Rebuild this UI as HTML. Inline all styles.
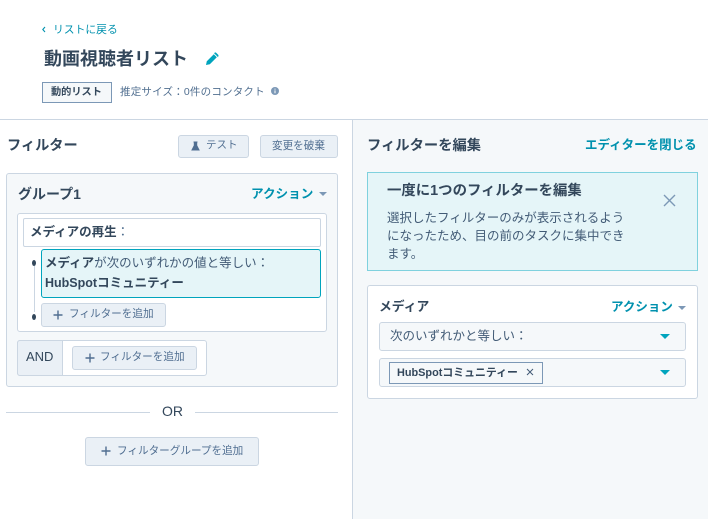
<!DOCTYPE html>
<html lang="ja"><head><meta charset="utf-8"><style>
html,body{margin:0;padding:0;background:#fff}
#r{position:relative;width:708px;height:519px;overflow:hidden;background:#fff;font-family:"Liberation Sans","Noto Sans CJK JP",sans-serif;color:#33475b;filter:blur(.3px)}
#r div,#r svg{position:absolute;box-sizing:border-box}
.t{white-space:nowrap;line-height:18px}
.b{font-weight:700}
.l{color:#0091ae}
.btn{background:#eaf0f6;border:1px solid #cbd6e2;border-radius:3px}
.g{color:#506e91}
</style></head><body><div id="r">
<svg style="left:41px;top:25px" width="6" height="9" viewBox="0 0 6 9"><path d="M4 2 1.8 4.5 4 7" fill="none" stroke="#0091ae" stroke-width="1.1"/></svg>
<div class="t l" style="left:53px;top:21px;font-size:10.8px">リストに戻る</div>
<div class="t b" style="left:44px;top:47px;font-size:18px;line-height:24px;width:150px">動画視聴者リスト</div>
<svg style="left:205px;top:52px" width="14" height="14" viewBox="0 0 14 14"><path d="M1 13 1.8 9.2 8.8 2.2 11.8 5.2 4.8 12.2Z" fill="#00a4bd"/><path d="M9.8 1.2 10.6.9 13 3.3 12.8 4.2Z" fill="#00a4bd" stroke="#00a4bd"/></svg>
<div style="left:42px;top:82px;width:70px;height:21px;background:#f5f8fa;border:1px solid #7c98b6"></div>
<div class="t b" style="left:51px;top:84px;font-size:10.2px">動的リスト</div>
<div class="t" style="left:120px;top:83px;font-size:10.5px;color:#516f90;letter-spacing:.2px">推定サイズ：0件のコンタクト</div>
<svg style="left:271px;top:87px" width="8" height="8" viewBox="0 0 8 8"><circle cx="4" cy="4" r="4" fill="#7c98b6"/><path d="M4 3.4V6.2M4 1.6V2.6" stroke="#fff" stroke-width="1"/></svg>

<div style="left:0;top:119px;width:708px;height:1px;background:#cbd6e2"></div>
<div style="left:353px;top:120px;width:355px;height:399px;background:#f5f8fa"></div>
<div style="left:352px;top:119px;width:1px;height:400px;background:#cbd6e2"></div>

<div class="t b" style="left:7px;top:136px;font-size:14.2px;line-height:20px">フィルター</div>
<div class="btn" style="left:178px;top:135px;width:71px;height:23px"></div>
<svg style="left:190px;top:141px" width="11" height="11" viewBox="0 0 11 11"><path d="M3.5 1h4M4.3 1v3.5L2 9h7L6.7 4.5V1" fill="#506e91" stroke="#506e91"/></svg>
<div class="t g" style="left:206px;top:136px;font-size:10.5px">テスト</div>
<div class="btn" style="left:260px;top:135px;width:78px;height:23px"></div>
<div class="t g" style="left:272px;top:137px;font-size:10.6px">変更を破棄</div>

<div style="left:6px;top:173px;width:332px;height:214px;background:#f5f8fa;border:1px solid #cbd6e2;border-radius:3px"></div>
<div class="t b" style="left:18px;top:184px;font-size:14px;line-height:20px">グループ1</div>
<div class="t b l" style="left:251px;top:185px;font-size:12.6px">アクション</div>
<div style="left:319px;top:192px;width:0;height:0;border:4px solid transparent;border-top:4px solid #7c98b6;border-bottom:0"></div>

<div style="left:17px;top:213px;width:310px;height:119px;background:#fff;border:1px solid #cbd6e2;border-radius:3px"></div>
<div style="left:23px;top:218px;width:298px;height:29px;background:#fff;border:1px solid #cbd6e2;border-radius:2px"></div>
<div class="t" style="left:30px;top:223px;font-size:12.5px"><span class="b">メディアの再生</span><span style="color:#516f90">：</span></div>
<div style="left:34px;top:266px;width:1px;height:46px;background:#cbd6e2"></div>
<div style="left:32px;top:260px;width:4px;height:6px;border-radius:50%;background:#33475b"></div>
<div style="left:32px;top:314px;width:4px;height:6px;border-radius:50%;background:#33475b"></div>
<div style="left:41px;top:249px;width:280px;height:49px;background:#e5f5f8;border:1px solid #00a4bd;border-radius:3px"></div>
<div class="t" style="left:45px;top:254px;font-size:12.5px"><span class="b">メディア</span><span style="color:#425b76">が次のいずれかの値と等しい：</span></div>
<div class="t b" style="left:45px;top:274px;font-size:12.5px">HubSpotコミュニティー</div>
<div class="btn" style="left:41px;top:303px;width:125px;height:24px"></div>
<svg style="left:53px;top:310px" width="10" height="10" viewBox="0 0 10 10"><path d="M5 .5v9M.5 5h9" stroke="#506e91" stroke-width="1.4"/></svg>
<div class="t g" style="left:69px;top:305px;font-size:10.6px">フィルターを追加</div>

<div style="left:17px;top:340px;width:190px;height:36px;background:#fff;border:1px solid #cbd6e2;border-radius:3px"></div>
<div style="left:17px;top:340px;width:46px;height:36px;background:#eaf0f6;border:1px solid #cbd6e2;border-radius:3px 0 0 3px"></div>
<div class="t" style="left:26px;top:348px;font-size:13px;color:#33475b">AND</div>
<div class="btn" style="left:72px;top:346px;width:125px;height:24px"></div>
<svg style="left:85px;top:353px" width="10" height="10" viewBox="0 0 10 10"><path d="M5 .5v9M.5 5h9" stroke="#506e91" stroke-width="1.4"/></svg>
<div class="t g" style="left:100px;top:348px;font-size:10.6px">フィルターを追加</div>

<div style="left:6px;top:412px;width:144px;height:1px;background:#cbd6e2"></div>
<div style="left:195px;top:412px;width:143px;height:1px;background:#cbd6e2"></div>
<div class="t" style="left:162px;top:402px;font-size:14px">OR</div>
<div class="btn" style="left:85px;top:437px;width:174px;height:29px"></div>
<svg style="left:101px;top:446px" width="10" height="10" viewBox="0 0 10 10"><path d="M5 .5v9M.5 5h9" stroke="#506e91" stroke-width="1.4"/></svg>
<div class="t g" style="left:117px;top:442px;font-size:10.6px">フィルターグループを追加</div>

<div class="t b" style="left:367px;top:136px;font-size:14.3px;line-height:20px">フィルターを編集</div>
<div class="t b l" style="left:585px;top:136px;font-size:12.5px">エディターを閉じる</div>
<div style="left:367px;top:172px;width:331px;height:99px;background:#e5f5f8;border:1px solid #7fd1de"></div>
<div class="t b" style="left:387px;top:181px;font-size:14.4px;line-height:20px">一度に1つのフィルターを編集</div>
<div style="left:387px;top:209px;width:240px;font-size:12.5px;line-height:18px;color:#425b76">選択したフィルターのみが表示されるようになったため、目の前のタスクに集中できます。</div>
<svg style="left:663px;top:194px" width="13" height="13" viewBox="0 0 13 13"><path d="M1 1 12 12M12 1 1 12" stroke="#7c98b6" stroke-width="1.4"/></svg>

<div style="left:367px;top:285px;width:331px;height:114px;background:#fff;border:1px solid #cbd6e2;border-radius:3px"></div>
<div class="t b" style="left:379px;top:298px;font-size:12.8px">メディア</div>
<div class="t b l" style="left:611px;top:298px;font-size:12.5px">アクション</div>
<div style="left:678px;top:306px;width:0;height:0;border:4px solid transparent;border-top:4px solid #7c98b6;border-bottom:0"></div>
<div style="left:379px;top:322px;width:307px;height:29px;background:#f5f8fa;border:1px solid #cbd6e2;border-radius:3px"></div>
<div class="t" style="left:390px;top:327px;font-size:12.5px;color:#425b76">次のいずれかと等しい：</div>
<div style="left:660px;top:334px;width:0;height:0;border:5px solid transparent;border-top:5px solid #00a4bd;border-bottom:0"></div>
<div style="left:379px;top:358px;width:307px;height:29px;background:#f5f8fa;border:1px solid #cbd6e2;border-radius:3px"></div>
<div style="left:389px;top:362px;width:154px;height:22px;background:#f5f8fa;border:1px solid #7c98b6"></div>
<div class="t b" style="left:397px;top:364px;font-size:10.9px">HubSpotコミュニティー</div>
<svg style="left:526px;top:368px" width="8" height="8" viewBox="0 0 8 8"><path d="M1 1 7 7M7 1 1 7" stroke="#425b76" stroke-width="1"/></svg>
<div style="left:660px;top:370px;width:0;height:0;border:5px solid transparent;border-top:5px solid #00a4bd;border-bottom:0"></div>
</div></body></html>
